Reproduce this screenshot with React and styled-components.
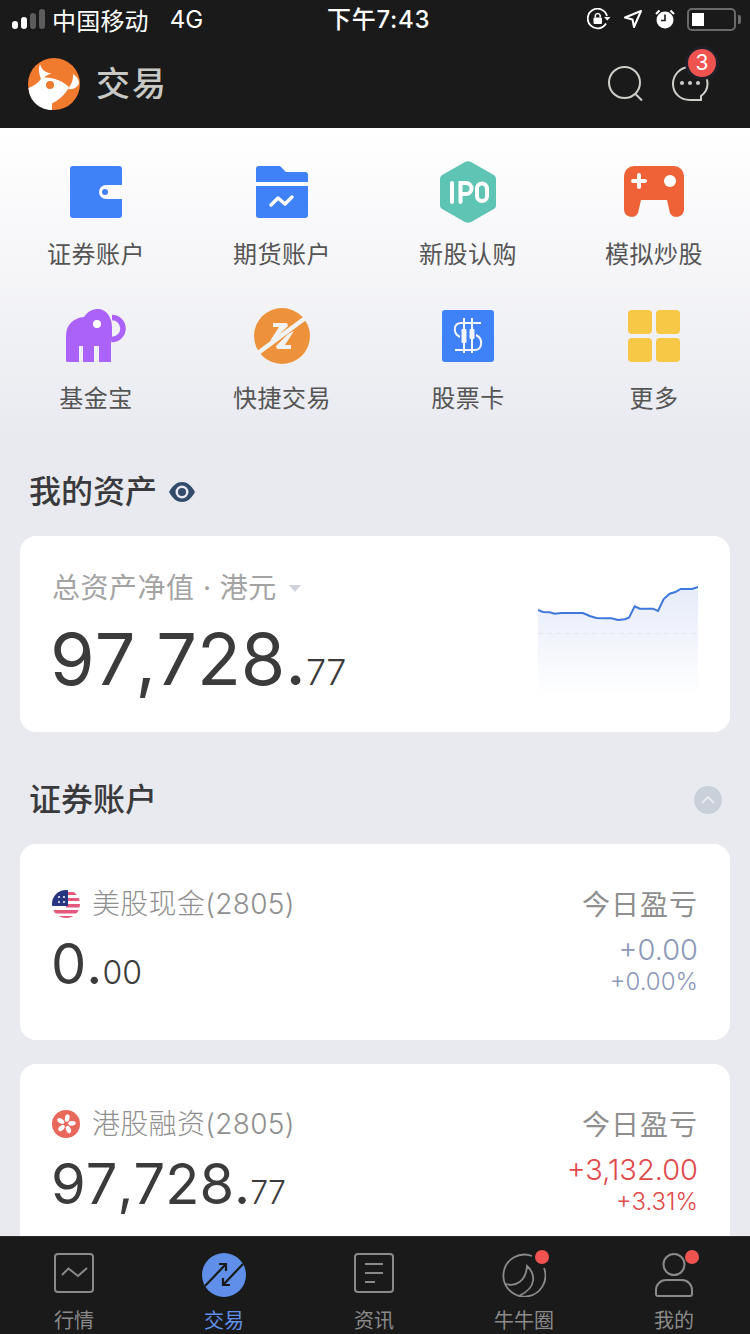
import React from "react"
import styled, { createGlobalStyle } from "styled-components"

const GlobalStyle = createGlobalStyle`
  html, body {
    margin: 0;
    padding: 0;
    background: #e9eaf0;
    font-family: Inter, "Noto Sans CJK SC", sans-serif;
  }
  * {
    box-sizing: border-box;
  }
`

const Screen = styled.div`
  position: relative;
  width: 750px;
  height: 1334px;
  overflow: hidden;
  background: #e9eaf0;
`

const TopBar = styled.header`
  height: 128px;
  background: #1a1a1a;
`

const StatusBar = styled.div`
  display: flex;
  align-items: center;
  justify-content: space-between;
  height: 40px;
  padding: 0 14px 2px 12px;
  color: #fff;
  font-size: 24px;
  position: relative;
`

const StatusGroup = styled.div`
  display: flex;
  align-items: center;
`

const Signal = styled.span`
  display: flex;
  align-items: flex-end;
  gap: 3px;
  margin-right: 7px;
`

const SignalBar = styled.i`
  display: block;
  width: 6px;
  height: ${(p) => p.$h}px;
  border-radius: 3px;
  background: ${(p) => (p.$on ? "#fff" : "#5c5c5c")};
`

const Carrier = styled.span`
  letter-spacing: 0.2px;
`

const Network = styled.span`
  margin-left: 21px;
`

const Clock = styled.span`
  position: absolute;
  left: 327px;
  top: 3px;
  font-weight: 500;
  letter-spacing: 0.7px;
  line-height: 34px;
`

const Battery = styled.span`
  display: block;
  position: relative;
  width: 49px;
  height: 23px;
  margin-left: 12px;
  border: 2px solid #6a6a6a;
  border-radius: 5px;
  padding: 3px;
  &:after {
    content: "";
    position: absolute;
    right: -7px;
    top: 5px;
    width: 3px;
    height: 9px;
    border-radius: 0 2px 2px 0;
    background: #6a6a6a;
  }
`

const BatteryLevel = styled.i`
  display: block;
  width: 12px;
  height: 100%;
  background: #fff;
`

const NavBar = styled.div`
  display: flex;
  align-items: center;
  height: 88px;
  padding: 0 41px 0 28px;
`

const NavTitle = styled.h1`
  flex: 1;
  margin: 0 0 0 16px;
  color: #c8c8c4;
  font-size: 34px;
  font-weight: 500;
  line-height: 48px;
  letter-spacing: 2px;
`

const NavIcons = styled.div`
  display: flex;
  align-items: center;
  gap: 27px;
`

const MessageButton = styled.div`
  position: relative;
  width: 38px;
  height: 38px;
`

const Badge = styled.span`
  position: absolute;
  top: -19px;
  left: 14px;
  width: 34px;
  height: 34px;
  border: 3px solid #20202a;
  border-radius: 50%;
  background: #ee5350;
  color: #fff;
  font-size: 21px;
  line-height: 28px;
  text-align: center;
`

const Shortcuts = styled.section`
  display: grid;
  grid-template-columns: repeat(4, 186px);
  grid-auto-rows: 144px;
  height: 312px;
  padding: 28px 0 0 3px;
  background: linear-gradient(#ffffff 0%, #e9eaf0 100%);
`

const Shortcut = styled.div`
  display: flex;
  flex-direction: column;
  align-items: center;
`

const ShortcutIcon = styled.div`
  display: flex;
  align-items: center;
  justify-content: center;
  height: 72px;
`

const ShortcutLabel = styled.span`
  margin-top: 9px;
  color: #555;
  font-size: 24px;
  line-height: 36px;
  letter-spacing: 0.5px;
`

const SectionHead = styled.div`
  display: flex;
  align-items: center;
  justify-content: space-between;
  height: 48px;
  padding: 0 28px 0 29px;
  margin-top: ${(p) => p.$top}px;
`

const SectionTitle = styled.h2`
  display: flex;
  align-items: center;
  gap: 12px;
  margin: 0;
  color: #3a3a3c;
  font-size: 32px;
  font-weight: 500;
  line-height: 48px;
`

const Collapse = styled.span`
  display: flex;
  align-items: center;
  justify-content: center;
  width: 28px;
  height: 28px;
  border-radius: 50%;
  background: #c9d0da;
`

const Card = styled.article`
  display: flex;
  justify-content: space-between;
  height: 196px;
  margin: ${(p) => p.$top}px 20px 0;
  padding: ${(p) => p.$pad}px 32px 0;
  border-radius: 16px;
  background: #fff;
`

const CardLabel = styled.div`
  display: flex;
  align-items: center;
  color: #a3a3a3;
  font-size: 28px;
  line-height: 42px;
  letter-spacing: 0.5px;
`

const Caret = styled.i`
  width: 0;
  height: 0;
  margin-left: 12px;
  border-style: solid;
  border-width: 7px 6px 0;
  border-color: #d0d3dc transparent transparent;
`

const BigAmount = styled.div`
  margin: 8px 0 0 -2px;
  color: #3b3b3b;
  font-size: 72px;
  font-kerning: none;
  line-height: 84px;
`

const Cents = styled.span`
  font-size: 36px;
  font-weight: 300;
`

const Chart = styled.svg`
  display: block;
  margin: 13px 0 0;
`

const AccountName = styled.div`
  display: flex;
  align-items: center;
  gap: 12px;
  color: #8f8f8f;
  font-size: 28px;
  font-weight: 300;
  line-height: 40px;
  letter-spacing: 0.3px;
`

const AccountAmount = styled.div`
  margin-top: 5px;
  margin-left: -1px;
  color: #3b3b3b;
  font-size: 56px;
  font-kerning: none;
  line-height: 70px;
`

const AccountCents = styled.span`
  font-size: 32px;
  font-weight: 300;
`

const Profit = styled.div`
  display: flex;
  flex-direction: column;
  align-items: flex-end;
  padding-top: 1px;
  color: ${(p) => (p.$up ? "#e0494a" : "#8c98b8")};
`

const ProfitLabel = styled.span`
  color: #8f8f8f;
  font-size: 28px;
  line-height: 40px;
  letter-spacing: 1px;
`

const ProfitValue = styled.span`
  margin-top: 7px;
  font-size: 29px;
  font-weight: 300;
  line-height: 36px;
`

const ProfitRate = styled.span`
  font-size: 24px;
  font-weight: 300;
  line-height: 28px;
`

const TabBar = styled.nav`
  position: absolute;
  left: -1px;
  right: 0;
  bottom: 0;
  display: grid;
  grid-template-columns: repeat(5, 150px);
  height: 98px;
  background: #1a1a1a;
  border-top: 1px solid #2a2a2a;
`

const Tab = styled.div`
  display: flex;
  flex-direction: column;
  align-items: center;
  padding-top: 16px;
  color: ${(p) => (p.$active ? "#5f8fe8" : "#8a8a8a")};
  font-size: 20px;
`

const TabIcon = styled.div`
  position: relative;
  height: 46px;
`

const TabLabel = styled.span`
  margin-top: 8px;
  line-height: 28px;
`

const Dot = styled.i`
  position: absolute;
  top: -3px;
  right: ${(p) => p.$right}px;
  width: 14px;
  height: 14px;
  border-radius: 50%;
  background: #ee5350;
`

const LogoIcon = () => (
  <svg width="52" height="52" viewBox="0 0 52 52">
    <circle cx="26" cy="26" r="26" fill="#f07a2e" />
    <path
      d="M0.5 30 C6 28 10 25 13 21 C11 16 10 11 12 6 C13 11 17 15 24 15.5 C20 16 18 18 16 19.5 C25 19 35 23 41 29 C38 36 31 42 24 45.5 L24 52 C11 52 1 42 0.5 30 Z"
      fill="#fff"
    />
    <path d="M45 16 C48 18 51 21 51 25 C50 29 45 32 40 31 C43 27 45.5 22 45 16 Z" fill="#fff" />
    <circle cx="22" cy="27" r="4" fill="#f07a2e" />
  </svg>
)

const SearchIcon = () => (
  <svg width="36" height="36" viewBox="0 0 36 36" fill="none" stroke="#cfcfca" strokeWidth="2">
    <circle cx="16.5" cy="16.5" r="15.5" />
    <path d="M27.5 28 L34 34.5" />
  </svg>
)

const MessageIcon = () => (
  <svg width="38" height="38" viewBox="0 0 38 38" fill="none">
    <path
      d="M19 2 C9 2 2 10 2 19 C2 28 9 35 19 35 L30 35 L30 31 C34 28 36.5 24 36.5 19 C36.5 10 29 2 19 2 Z"
      stroke="#cfcfca"
      strokeWidth="2"
    />
    <circle cx="11" cy="18" r="2" fill="#cfcfca" />
    <circle cx="19" cy="18" r="2" fill="#cfcfca" />
    <circle cx="27" cy="18" r="2" fill="#cfcfca" />
  </svg>
)

const LockIcon = () => (
  <svg width="24" height="22" viewBox="0 0 24 22" fill="none" style={{ marginRight: 12 }}>
    <path d="M19 15.5 A9.8 9.8 0 1 1 20 8" stroke="#fff" strokeWidth="1.8" />
    <path d="M17 9 L23.5 9 L20.3 12.5 Z" fill="#fff" />
    <rect x="6.5" y="9.5" width="8.5" height="6.5" rx="1" fill="#fff" />
    <path d="M8.3 9.5 V7.5 A2.5 2.5 0 0 1 13.2 7.5 V9.5" stroke="#fff" strokeWidth="1.5" />
  </svg>
)

const LocationIcon = () => (
  <svg width="20" height="20" viewBox="0 0 20 20" fill="none" style={{ marginRight: 12 }}>
    <path d="M18 2 L2 8.5 L9.5 10.5 L11 18 Z" stroke="#fff" strokeWidth="2" strokeLinejoin="round" />
  </svg>
)

const AlarmIcon = () => (
  <svg width="20" height="20" viewBox="0 0 20 20">
    <circle cx="10" cy="11" r="8.5" fill="#fff" />
    <path d="M10 5.5 V11.5 H6" fill="none" stroke="#1a1a1a" strokeWidth="1.6" />
    <path d="M1 5 L4.5 1.5 M19 5 L15.5 1.5" stroke="#fff" strokeWidth="2" />
  </svg>
)

const WalletIcon = () => (
  <svg width="52" height="52" viewBox="0 0 52 52">
    <path
      d="M3 0 H49 A3 3 0 0 1 52 3 V19 H36 A7 7 0 0 0 36 33 H52 V49 A3 3 0 0 1 49 52 H3 A3 3 0 0 1 0 49 V3 A3 3 0 0 1 3 0 Z"
      fill="#3f82f7"
    />
    <circle cx="35" cy="26" r="3" fill="#3f82f7" />
  </svg>
)

const FolderIcon = () => (
  <svg width="52" height="52" viewBox="0 0 52 52">
    <path d="M0 16 V3 A3 3 0 0 1 3 0 H24 L30 6 H49 A3 3 0 0 1 52 9 V16 Z" fill="#3f82f7" />
    <path d="M0 20 H52 V49 A3 3 0 0 1 49 52 H3 A3 3 0 0 1 0 49 Z" fill="#3f82f7" />
    <path d="M15 39 L22 32 L29 38 L36 31" fill="none" stroke="#fff" strokeWidth="3.5" strokeLinecap="round" strokeLinejoin="round" />
  </svg>
)

const IpoIcon = () => (
  <svg width="56" height="62" viewBox="0 0 56 62">
    <path
      d="M25 1 Q28 -0.5 31 1 L53 13.5 Q56 15 56 18 V44 Q56 47 53 48.5 L31 61 Q28 62.5 25 61 L3 48.5 Q0 47 0 44 V18 Q0 15 3 13.5 Z"
      fill="#5ec4b4"
    />
    <path
      d="M12 22 V41 M20.5 41 V22 H26 A5.5 5.5 0 0 1 26 33 H20.5 M37 27.5 A5 5 0 0 1 47 27.5 V35 A5 5 0 0 1 37 35 Z"
      fill="none"
      stroke="#fff"
      strokeWidth="4"
      strokeLinecap="round"
    />
  </svg>
)

const GamepadIcon = () => (
  <svg width="60" height="52" viewBox="0 0 60 52">
    <path
      d="M10 0 H50 A10 10 0 0 1 60 10 V44 A7.5 7.5 0 0 1 46 47 L43 34 H17 L14 47 A7.5 7.5 0 0 1 0 44 V10 A10 10 0 0 1 10 0 Z"
      fill="#ef6136"
    />
    <path d="M15 9 V21 M9 15 H21" stroke="#fff" strokeWidth="4" strokeLinecap="round" />
    <circle cx="46" cy="15" r="6" fill="#fff" />
  </svg>
)

const ElephantIcon = () => (
  <svg width="60" height="54" viewBox="0 0 60 54">
    <path d="M46 8.5 A11 11 0 0 1 46 30.5" fill="none" stroke="#ab62f9" strokeWidth="5.5" />
    <path
      d="M0 52 V27 C0 15 8 9 18 8 C22 2 27 0 32 0 C40 0 46 8 46 18 V30 C46 32 46 32 45 34 V53 H33 V37 H28 V53 H17 V37 H13 V53 H2 Q0 53 0 52 Z"
      fill="#ab62f9"
    />
    <circle cx="31" cy="15" r="4" fill="#fff" />
  </svg>
)

const QuickTradeIcon = () => (
  <svg width="56" height="56" viewBox="0 0 56 56">
    <circle cx="28" cy="28" r="28" fill="#ed923a" />
    <path d="M52 9.5 L4 45" stroke="#f1f2f6" strokeWidth="4.5" />
    <path d="M19 15 H33 L34 18 L22 30 L16 33 L25 19 H19 Z" fill="#f1f2f6" />
    <path d="M37 41 H23 L22 38 L34 26 L40 23 L31 37 H37 Z" fill="#f1f2f6" />
  </svg>
)

const CardStockIcon = () => (
  <svg width="52" height="52" viewBox="0 0 52 52" fill="none">
    <rect width="52" height="52" rx="3" fill="#3f82f7" />
    <path d="M39 13 H19 C12 13 10 23 18 27 M34 25 C42 29 40 40 33 40 H13" stroke="#f4f6fb" strokeWidth="2" />
    <path d="M22 8 V43 M30 8 V43" stroke="#f4f6fb" strokeWidth="2" />
    <rect x="19.5" y="19" width="5" height="14" rx="1" fill="#f4f6fb" />
    <rect x="27.5" y="19" width="5" height="10" rx="1" fill="#f4f6fb" />
  </svg>
)

const MoreIcon = () => (
  <svg width="52" height="52" viewBox="0 0 52 52" fill="#f7c746">
    <rect width="24" height="24" rx="4" />
    <rect x="28" width="24" height="24" rx="4" />
    <rect y="28" width="24" height="24" rx="4" />
    <rect x="28" y="28" width="24" height="24" rx="4" />
  </svg>
)

const EyeIcon = () => (
  <svg width="26" height="20" viewBox="0 0 26 20">
    <path d="M0 10 C4 3 8 0 13 0 C18 0 22 3 26 10 C22 17 18 20 13 20 C8 20 4 17 0 10 Z" fill="#344a6a" />
    <circle cx="13" cy="10" r="6.5" fill="#e9eaf0" />
    <circle cx="13" cy="10" r="4" fill="#344a6a" />
  </svg>
)

const ChevronUp = () => (
  <svg width="14" height="8" viewBox="0 0 14 8" fill="none" stroke="#eef1f5" strokeWidth="1.6">
    <path d="M1 7 L7 1 L13 7" />
  </svg>
)

const UsFlag = () => (
  <svg width="28" height="28" viewBox="0 0 28 28">
    <defs>
      <clipPath id="usClip">
        <circle cx="14" cy="14" r="14" />
      </clipPath>
    </defs>
    <g clipPath="url(#usClip)">
      <rect width="28" height="28" fill="#fff" />
      <path d="M14 2 H28 V5 H14 Z M14 8 H28 V11 H14 Z M14 14 H28 V17.5 H14 Z M0 20 H28 V23.5 H0 Z M0 26 H28 V28 H0 Z" fill="#e5577b" />
      <rect width="16" height="16" fill="#28367f" />
      <g fill="#fff">
        <circle cx="7" cy="7" r="1" />
        <circle cx="12" cy="7" r="1" />
        <circle cx="7" cy="12" r="1" />
        <circle cx="12" cy="12" r="1" />
      </g>
    </g>
  </svg>
)

const HkFlag = () => (
  <svg width="28" height="28" viewBox="0 0 28 28">
    <circle cx="14" cy="14" r="14" fill="#e8685c" />
    <g fill="#fff">
      {[0, 72, 144, 216, 288].map((angle) => (
        <ellipse key={angle} cx="14" cy="8" rx="2.3" ry="3.8" transform={`rotate(${angle + 12} 14 14)`} />
      ))}
    </g>
  </svg>
)

const sparkPoints =
  "0,30 5,32 11.7,32.3 16.7,33.7 23.3,33 45,33 51.7,36 58.3,38 65,38.3 73.3,38.3 80,40 86.7,39.3 91,37.7 96.7,26.3 101.7,28.7 115,28.7 120,31 125.7,19 131.7,13.7 137.3,12 142.7,9 154,9 160,7"

const SparkChart = () => (
  <Chart width="160" height="116" viewBox="0 0 160 116">
    <defs>
      <linearGradient id="sparkFill" x1="0" y1="0" x2="0" y2="1">
        <stop offset="0%" stopColor="#e6ebf9" />
        <stop offset="100%" stopColor="#ffffff" />
      </linearGradient>
    </defs>
    <polygon points={`${sparkPoints} 160,116 0,116`} fill="url(#sparkFill)" />
    <line x1="0" y1="53.5" x2="160" y2="53.5" stroke="#e6e9f3" strokeWidth="1.5" strokeDasharray="5 4" />
    <polyline points={sparkPoints} fill="none" stroke="#3e78de" strokeWidth="2" />
  </Chart>
)

const MarketTabIcon = () => (
  <svg width="40" height="40" viewBox="0 0 40 40" fill="none" stroke="#8a8a8a" strokeWidth="2">
    <rect x="1" y="1" width="38" height="38" rx="3" />
    <path d="M8 22 L14.5 15.5 L24 23 L33 15" />
  </svg>
)

const TradeTabIcon = () => (
  <svg width="44" height="44" viewBox="0 0 44 44" fill="none">
    <circle cx="22" cy="22" r="22" fill="#5f8fe8" />
    <path d="M3 33 L24 11 M17 11 H24 V18" stroke="#1a1a1a" strokeWidth="2.2" />
    <path d="M41 11 L21 32 M21 25 V32 H28" stroke="#1a1a1a" strokeWidth="2.2" />
  </svg>
)

const NewsTabIcon = () => (
  <svg width="40" height="40" viewBox="0 0 40 40" fill="none" stroke="#8a8a8a" strokeWidth="2">
    <rect x="1" y="1" width="38" height="38" rx="3" />
    <path d="M11 11 H29 M11 20 H29 M11 29 H21" />
  </svg>
)

const CircleTabIcon = () => (
  <svg width="44" height="44" viewBox="0 0 44 44" fill="none" stroke="#8a8a8a" strokeWidth="1.8">
    <path d="M30 3 A21 21 0 1 0 42 15" />
    <path d="M4 31 C14 34 24 28 25 13 C33 20 36 34 17 43" />
  </svg>
)

const MeTabIcon = () => (
  <svg width="38" height="44" viewBox="0 0 38 44" fill="none" stroke="#8a8a8a" strokeWidth="2">
    <circle cx="19" cy="11.5" r="10.5" />
    <path d="M11 27 H27 A10 10 0 0 1 37 37 V41 Q37 43 35 43 H3 Q1 43 1 41 V37 A10 10 0 0 1 11 27 Z" />
  </svg>
)

const shortcuts = [
  { label: "证券账户", icon: <WalletIcon /> },
  { label: "期货账户", icon: <FolderIcon /> },
  { label: "新股认购", icon: <IpoIcon /> },
  { label: "模拟炒股", icon: <GamepadIcon /> },
  { label: "基金宝", icon: <ElephantIcon /> },
  { label: "快捷交易", icon: <QuickTradeIcon /> },
  { label: "股票卡", icon: <CardStockIcon /> },
  { label: "更多", icon: <MoreIcon /> },
]

const tabs = [
  { label: "行情", icon: <MarketTabIcon /> },
  { label: "交易", icon: <TradeTabIcon />, active: true },
  { label: "资讯", icon: <NewsTabIcon /> },
  { label: "牛牛圈", icon: <CircleTabIcon />, dot: -3 },
  { label: "我的", icon: <MeTabIcon />, dot: -6 },
]

const Account = ({ flag, name, whole, cents, value, rate, up, top }) => (
  <Card $top={top} $pad={40}>
    <div>
      <AccountName>
        {flag}
        {name}
      </AccountName>
      <AccountAmount>
        {whole}.<AccountCents>{cents}</AccountCents>
      </AccountAmount>
    </div>
    <Profit $up={up}>
      <ProfitLabel>今日盈亏</ProfitLabel>
      <ProfitValue>{value}</ProfitValue>
      <ProfitRate>{rate}</ProfitRate>
    </Profit>
  </Card>
)

const App = () => {
  return (
    <Screen>
      <GlobalStyle />
      <TopBar>
        <StatusBar>
          <StatusGroup>
            <Signal>
              <SignalBar $h={8} $on />
              <SignalBar $h={12} $on />
              <SignalBar $h={16} />
              <SignalBar $h={20} />
            </Signal>
            <Carrier>中国移动</Carrier>
            <Network>4G</Network>
          </StatusGroup>
          <Clock>下午7:43</Clock>
          <StatusGroup>
            <LockIcon />
            <LocationIcon />
            <AlarmIcon />
            <Battery>
              <BatteryLevel />
            </Battery>
          </StatusGroup>
        </StatusBar>
        <NavBar>
          <LogoIcon />
          <NavTitle>交易</NavTitle>
          <NavIcons>
            <SearchIcon />
            <MessageButton>
              <MessageIcon />
              <Badge>3</Badge>
            </MessageButton>
          </NavIcons>
        </NavBar>
      </TopBar>

      <Shortcuts>
        {shortcuts.map((item) => (
          <Shortcut key={item.label}>
            <ShortcutIcon>{item.icon}</ShortcutIcon>
            <ShortcutLabel>{item.label}</ShortcutLabel>
          </Shortcut>
        ))}
      </Shortcuts>

      <SectionHead $top={28}>
        <SectionTitle>
          我的资产
          <EyeIcon />
        </SectionTitle>
      </SectionHead>
      <Card $top={20} $pad={31}>
        <div>
          <CardLabel>
            总资产净值 · 港元
            <Caret />
          </CardLabel>
          <BigAmount>
            97,728.<Cents>77</Cents>
          </BigAmount>
        </div>
        <SparkChart />
      </Card>

      <SectionHead $top={44}>
        <SectionTitle>证券账户</SectionTitle>
        <Collapse>
          <ChevronUp />
        </Collapse>
      </SectionHead>
      <Account top={20} flag={<UsFlag />} name="美股现金(2805)" whole="0" cents="00" value="+0.00" rate="+0.00%" />
      <Account
        top={24}
        flag={<HkFlag />}
        name="港股融资(2805)"
        whole="97,728"
        cents="77"
        value="+3,132.00"
        rate="+3.31%"
        up
      />

      <TabBar>
        {tabs.map((tab) => (
          <Tab key={tab.label} $active={tab.active}>
            <TabIcon>
              {tab.icon}
              {tab.dot !== undefined && <Dot $right={tab.dot} />}
            </TabIcon>
            <TabLabel>{tab.label}</TabLabel>
          </Tab>
        ))}
      </TabBar>
    </Screen>
  )
}

export default App
